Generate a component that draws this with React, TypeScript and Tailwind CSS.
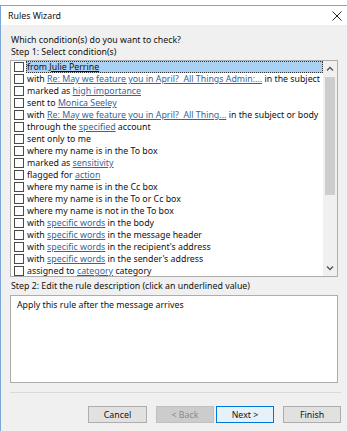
import React from "react";

type Part = string | { link: string };
const rows: Part[][] = [
  ["from ", { link: "Julie Perrine" }],
  ["with ", { link: "Re: May we feature you in April?  All Things Admin:..." }, " in the subject"],
  ["marked as ", { link: "high importance" }],
  ["sent to ", { link: "Monica Seeley" }],
  ["with ", { link: "Re: May we feature you in April?  All Thing..." }, " in the subject or body"],
  ["through the ", { link: "specified" }, " account"],
  ["sent only to me"],
  ["where my name is in the To box"],
  ["marked as ", { link: "sensitivity" }],
  ["flagged for ", { link: "action" }],
  ["where my name is in the Cc box"],
  ["where my name is in the To or Cc box"],
  ["where my name is not in the To box"],
  ["with ", { link: "specific words" }, " in the body"],
  ["with ", { link: "specific words" }, " in the message header"],
  ["with ", { link: "specific words" }, " in the recipient's address"],
  ["with ", { link: "specific words" }, " in the sender's address"],
  ["assigned to ", { link: "category" }, " category"],
];

function Row({ parts, selected }: { parts: Part[]; selected?: boolean }) {
  return (
    <div className="flex items-center h-[12px]">
      <div className="w-[10px] h-[10px] border border-[#4a4a4a] bg-white ml-[3px] mr-[2px] shrink-0" />
      <div
        className={
          "h-[12px] flex items-center pl-[1px] whitespace-pre " +
          (selected ? "bg-[#a9d1f3] outline outline-1 outline-dotted outline-[#333] -outline-offset-1 flex-1" : "")
        }
      >
        {parts.map((p, i) =>
          typeof p === "string" ? (
            <span key={i}>{p}</span>
          ) : (
            <span key={i} className={"underline " + (selected ? "text-[#111]" : "text-[#35659c]")}>
              {p.link}
            </span>
          )
        )}
      </div>
    </div>
  );
}

export default function App() {
  return (
    <div
      className="w-[347px] h-[431px] overflow-hidden bg-white flex flex-col text-[#111] text-[8.8px] leading-[12px]"
      style={{ fontFamily: "'Noto Sans', 'Open Sans', sans-serif" }}
    >
      <div className="h-[5px] bg-white" />
      <div className="flex-1 flex flex-col border-l border-t border-[#7ba6d6]">
        <div className="h-[19px] bg-white flex items-center justify-between pl-[7px] pr-[4px]">
          <span className="text-[8.8px] text-[#111]">Rules Wizard</span>
          <svg width="10" height="10" viewBox="0 0 10 10" className="mr-[1px]">
            <path d="M0.5 0.5 L9.5 9.5 M9.5 0.5 L0.5 9.5" stroke="#222" strokeWidth="1" fill="none" />
          </svg>
        </div>
        <div className="flex-1 bg-[#f0f0f0] pl-[9px] pr-[9px] flex flex-col">
          <div className="mt-[9px] pl-[1px]">Which condition(s) do you want to check?</div>
          <div className="pl-[1px]">Step 1: Select condition(s)</div>
          <div className="mt-[2px] h-[217px] border border-[#adadad] bg-white flex">
            <div className="flex-1 flex flex-col overflow-hidden">
              {rows.map((r, i) => (
                <Row key={i} parts={r} selected={i === 0} />
              ))}
            </div>
            <div className="w-[14px] bg-[#f0f0f0] flex flex-col items-center">
              <svg width="8" height="6" viewBox="0 0 8 6" className="mt-[5px]">
                <path d="M1 4.5 L4 1.5 L7 4.5" stroke="#555" strokeWidth="1.3" fill="none" />
              </svg>
              <div className="w-[10px] h-[118px] bg-[#cdcdcd] mt-[5px]" />
              <div className="flex-1" />
              <svg width="8" height="6" viewBox="0 0 8 6" className="mb-[5px]">
                <path d="M1 1.5 L4 4.5 L7 1.5" stroke="#555" strokeWidth="1.3" fill="none" />
              </svg>
            </div>
          </div>
          <div className="mt-[3px] pl-[1px]">Step 2: Edit the rule description (click an underlined value)</div>
          <div className="mt-[3px] h-[88px] border border-[#adadad] bg-white px-[6px] pt-[3px]">
            Apply this rule after the message arrives
          </div>
          <div className="mt-[9px] h-px bg-[#d9d9d9] mr-[-3px]" />
          <div className="mt-[13px] flex justify-end mr-[-3px]">
            <button className="w-[59px] h-[17px] bg-[#e1e1e1] border border-[#adadad] text-[#111] flex items-center justify-center">Cancel</button>
            <button className="ml-[9px] w-[58px] h-[17px] bg-[#cccccc] border border-[#bfbfbf] text-[#8a8a8a] flex items-center justify-center">&lt; Back</button>
            <button className="ml-[2px] w-[58px] h-[17px] bg-[#e5f1fb] border border-[#0078d7] text-[#111] flex items-center justify-center">Next &gt;</button>
            <button className="ml-[9px] w-[58px] h-[17px] bg-[#e1e1e1] border border-[#adadad] text-[#111] flex items-center justify-center">Finish</button>
          </div>
        </div>
      </div>
    </div>
  );
}
